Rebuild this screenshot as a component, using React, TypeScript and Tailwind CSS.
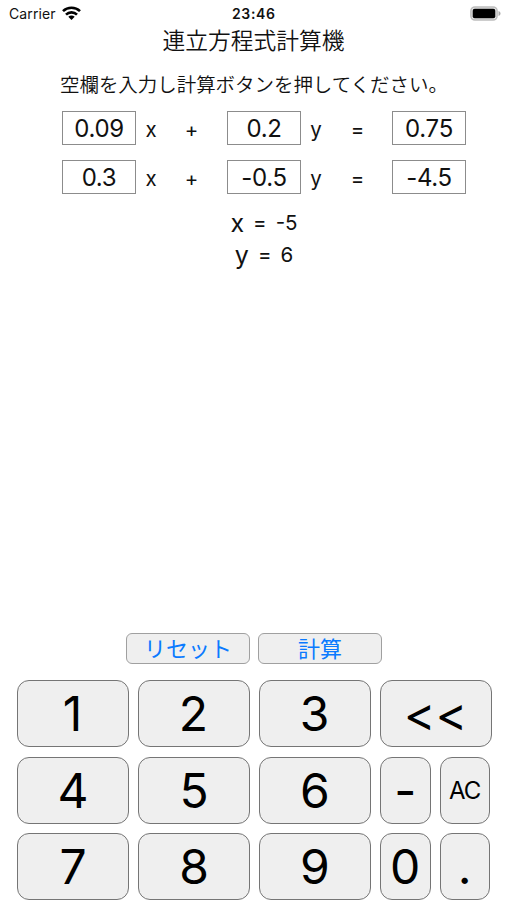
import type { ReactNode } from "react";

function StatusBar() {
  return (
    <header className="relative flex h-[27px] items-center justify-between pl-[9px] pr-[6px] text-[14px] leading-[27px]">
      <div className="flex items-center gap-[6px]">
        <span className="w-[47px] whitespace-nowrap tracking-[0.1px]">Carrier</span>
        <svg width="19" height="14" viewBox="0 0 19 14" fill="none" stroke="#000" strokeWidth="2.6" className="-mt-[2px]">
          <path d="M1 5.1C5.7.6 13.3.6 18 5.1" />
          <path d="M4 8.6c3-3 8-3 11 0" />
          <path d="M6.3 10.8c1.8-1.8 4.6-1.8 6.4 0L9.5 14Z" fill="#000" stroke="none" />
        </svg>
      </div>
      <span className="absolute left-[232px] top-0 whitespace-nowrap font-semibold tracking-[0.65px]">23:46</span>
      <svg width="31" height="15" viewBox="0 0 31 15" className="-mt-[1px]">
        <rect x="0.9" y="0.9" width="26.2" height="13.2" rx="4" fill="#e4e4e4" stroke="#bdbdbd" strokeWidth="1.5" />
        <rect x="2.7" y="2.7" width="22.6" height="9.6" rx="2" fill="#000" />
        <path d="M28.5 5v5c1.3-.5 2-1.4 2-2.5s-.7-2-2-2.5Z" fill="#a8a8a8" />
      </svg>
    </header>
  );
}

function Field({ children }: { children: ReactNode }) {
  return (
    <div className="h-[34px] w-[74px] shrink-0 border border-[#8c8c8c] text-center text-[24px] leading-[34px] tracking-[-0.3px]">
      {children}
    </div>
  );
}

function Equation({ a, b, c }: { a: string; b: string; c: string }) {
  return (
    <div className="flex h-[34px] items-start pl-[62px] text-[20.5px] leading-[37px]">
      <Field>{a}</Field>
      <span className="w-[30px] text-center">x</span>
      <span className="w-[51px] text-center">+</span>
      <span className="w-[10px]" />
      <Field>{b}</Field>
      <span className="w-[30px] text-center">y</span>
      <span className="w-[53px] text-center">=</span>
      <span className="w-[8px]" />
      <Field>{c}</Field>
    </div>
  );
}

function Result({ name, value }: { name: string; value: string }) {
  return (
    <div className="flex h-[32px] items-center justify-center gap-[9px] text-[20.5px] leading-[32px]">
      <span className="text-[25px]">{name}</span>
      <span>=</span>
      <span>{value}</span>
    </div>
  );
}

function Action({ children }: { children: ReactNode }) {
  return (
    <button className="h-[31px] w-[124px] rounded-[6px] border-[1.5px] border-[#a0a0a0] bg-[#efefef] text-center text-[22px] leading-[28px] text-[#0a7aff]">
      {children}
    </button>
  );
}

function Key({ children, narrow, small }: { children: ReactNode; narrow?: boolean; small?: boolean }) {
  return (
    <button
      className={`h-[67px] shrink-0 rounded-[12px] border border-[#757575] bg-[#efefef] text-center leading-[65px] ${
        narrow ? "w-[50.5px]" : "w-[112px]"
      } ${small ? "text-[24px] tracking-[-1px]" : "text-[48px]"}`}
    >
      {children}
    </button>
  );
}

export default function App() {
  return (
    <main className="flex h-[900px] w-[507px] flex-col overflow-hidden bg-white font-['Inter','Noto_Sans_CJK_JP',sans-serif] text-[#111]">
      <StatusBar />
      <h1 className="h-[28px] text-center text-[22.75px] font-[350] leading-[28px]">連立方程式計算機</h1>
      <p className="mt-[16px] h-[28px] whitespace-nowrap pl-[60px] text-[19.5px] font-[350] leading-[28px] tracking-[-0.05px]">
        空欄を入力し計算ボタンを押してください。
      </p>
      <section className="mt-[12px] flex flex-col gap-[15px]">
        <Equation a="0.09" b="0.2" c="0.75" />
        <Equation a="0.3" b="-0.5" c="-4.5" />
      </section>
      <section className="mt-[13px] pl-[21px]">
        <Result name="x" value="-5" />
        <Result name="y" value="6" />
      </section>
      <section className="mt-auto flex gap-[8px] pl-[126px]">
        <Action>リセット</Action>
        <Action>計算</Action>
      </section>
      <section className="mt-[16px] flex flex-col gap-[9.5px] text-black">
        <div className="flex gap-[9px] pl-[16.5px]">
          <Key>1</Key>
          <Key>2</Key>
          <Key>3</Key>
          <Key>&lt;&lt;</Key>
        </div>
        <div className="flex gap-[9px] pl-[17px]">
          <Key>4</Key>
          <Key>5</Key>
          <Key>6</Key>
          <Key narrow>-</Key>
          <Key narrow small>AC</Key>
        </div>
        <div className="flex gap-[9px] pl-[17px]">
          <Key>7</Key>
          <Key>8</Key>
          <Key>9</Key>
          <Key narrow>0</Key>
          <Key narrow>.</Key>
        </div>
      </section>
    </main>
  );
}
